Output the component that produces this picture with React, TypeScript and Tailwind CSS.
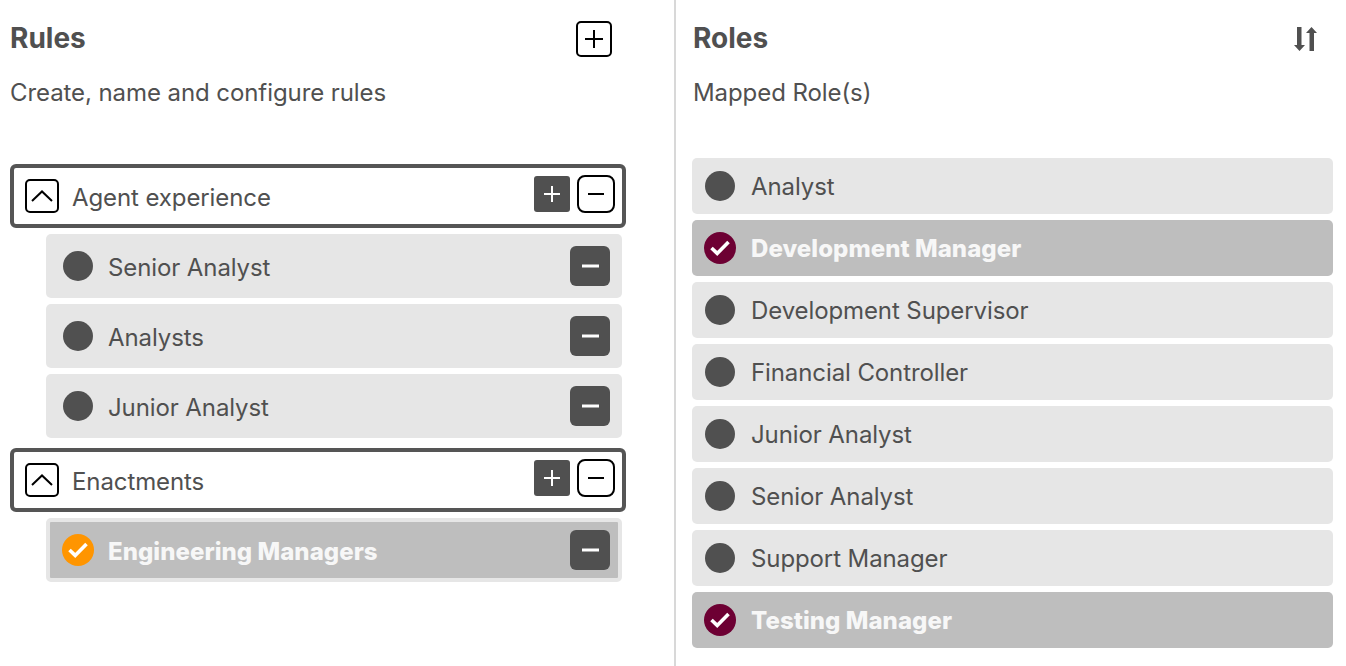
import React from "react"

const font = { fontFamily: "Inter, 'Liberation Sans', sans-serif" }

function Check() {
    return (
        <svg width="20" height="16" viewBox="0 0 20 16" fill="none">
            <path d="M1.5 8 L7.2 13.4 L18.5 2" stroke="white" strokeWidth="3.6" />
        </svg>
    )
}

function Dot({ color }: { color?: string }) {
    if (color) {
        return (
            <span className={"w-8 h-8 rounded-full flex items-center justify-center shrink-0 " + color}>
                <Check />
            </span>
        )
    }
    return <span className="w-[30px] h-[30px] mx-px rounded-full bg-[#505050] shrink-0" />
}

function PlusIcon({ stroke, size = 18 }: { stroke: string; size?: number }) {
    return (
        <svg width={size} height={size} viewBox={`0 0 ${size} ${size}`}>
            <path d={`M${size / 2} 0 V${size} M0 ${size / 2} H${size}`} stroke={stroke} strokeWidth="2" />
        </svg>
    )
}

function MinusIcon({ stroke, width = 16, weight = 2 }: { stroke: string; width?: number; weight?: number }) {
    return (
        <svg width={width} height="4" viewBox={`0 0 ${width} 4`}>
            <path d={`M0 2 H${width}`} stroke={stroke} strokeWidth={weight} />
        </svg>
    )
}

function Group({ name }: { name: string }) {
    return (
        <div className="h-16 w-[616px] border-4 border-[#555555] rounded-md bg-white flex items-center pl-[11px] pr-[7px]">
            <button className="w-[34px] h-[34px] border-2 border-black rounded-[5px] flex items-center justify-center shrink-0">
                <svg width="22" height="12" viewBox="0 0 22 12" fill="none">
                    <path d="M1 11 L11 1.5 L21 11" stroke="black" strokeWidth="2" />
                </svg>
            </button>
            <span className="ml-[13px] pt-1 text-[24px] tracking-[-0.1px] text-[#505050]">{name}</span>
            <button className="ml-auto -mt-1 w-9 h-9 bg-[#505050] rounded-[3px] flex items-center justify-center">
                <PlusIcon stroke="white" size={16} />
            </button>
            <button className="ml-[7px] -mt-1 w-[38px] h-[38px] border-2 border-black rounded-lg flex items-center justify-center">
                <MinusIcon stroke="black" />
            </button>
        </div>
    )
}

function Rule({ name, selected }: { name: string; selected?: boolean }) {
    return (
        <div
            className={
                "h-16 w-[576px] ml-9 rounded-[5px] flex items-center"
                + (selected ? " border-4 border-[#e6e6e6] bg-[#bebebe] pl-3 pr-2" : " bg-[#e6e6e6] pl-4 pr-3")
            }
        >
            <Dot color={selected ? "bg-[#ff9500]" : undefined} />
            <span
                className={
                    "ml-[14px] pt-1 text-[24px]"
                    + (selected ? " font-extrabold text-[#f7f7f7] tracking-[0.05px]" : " tracking-[-0.1px] text-[#505050]")
                }
            >
                {name}
            </span>
            <button className="ml-auto w-10 h-10 bg-[#505050] rounded-md flex items-center justify-center">
                <MinusIcon stroke="white" width={17} weight={3} />
            </button>
        </div>
    )
}

function Role({ name, selected }: { name: string; selected?: boolean }) {
    return (
        <div
            className={
                "h-14 rounded-[5px] flex items-center pl-3"
                + (selected ? " bg-[#bebebe]" : " bg-[#e6e6e6]")
            }
        >
            <Dot color={selected ? "bg-[#6d0033]" : undefined} />
            <span
                className={
                    "ml-[15px] pt-0.5 text-[24px]"
                    + (selected ? " font-extrabold text-[#f7f7f7] tracking-[0.05px]" : " tracking-[-0.1px] text-[#505050]")
                }
            >
                {name}
            </span>
        </div>
    )
}

export default function App() {
    return (
        <div className="w-[1346px] h-[666px] overflow-hidden bg-white flex" style={font}>
            <div className="w-[676px] border-r-2 border-[#d8d8d8] pl-[10px] pt-[21px]">
                <div className="flex items-center justify-between w-[602px] h-9">
                    <h2 className="-mt-0.5 text-[28px] font-bold text-[#505050]">Rules</h2>
                    <button className="w-9 h-9 border-2 border-black rounded-[5px] flex items-center justify-center">
                        <PlusIcon stroke="black" />
                    </button>
                </div>
                <p className="mt-5 h-8 leading-8 text-[24px] tracking-[-0.08px] text-[#505050]">
                    Create, name and configure rules
                </p>
                <div className="mt-[55px] flex flex-col">
                    <Group name="Agent experience" />
                    <div className="flex flex-col gap-1.5 mt-1.5">
                        <Rule name="Senior Analyst" />
                        <Rule name="Analysts" />
                        <Rule name="Junior Analyst" />
                    </div>
                    <div className="mt-2.5">
                        <Group name="Enactments" />
                    </div>
                    <div className="mt-1.5">
                        <Rule name="Engineering Managers" selected />
                    </div>
                </div>
            </div>
            <div className="flex-1 pl-4 pr-[13px] pt-[21px]">
                <div className="flex items-center justify-between h-9">
                    <h2 className="-mt-0.5 text-[28px] font-bold text-[#505050] ml-px">Roles</h2>
                    <svg className="mr-4" width="23" height="24" viewBox="0 0 23 24">
                        <path d="M3 0 H7.5 V18 H11 L5.5 24 L0 18 H3 Z" fill="#505050" />
                        <path d="M15.5 24 H20 V6 H23 L17.5 0 L12 6 H15.5 Z" fill="#505050" />
                    </svg>
                </div>
                <p className="mt-5 ml-px h-8 leading-8 text-[24px] tracking-[-0.08px] text-[#505050]">
                    Mapped Role(s)
                </p>
                <div className="mt-[49px] flex flex-col gap-1.5">
                    <Role name="Analyst" />
                    <Role name="Development Manager" selected />
                    <Role name="Development Supervisor" />
                    <Role name="Financial Controller" />
                    <Role name="Junior Analyst" />
                    <Role name="Senior Analyst" />
                    <Role name="Support Manager" />
                    <Role name="Testing Manager" selected />
                </div>
            </div>
        </div>
    )
}
